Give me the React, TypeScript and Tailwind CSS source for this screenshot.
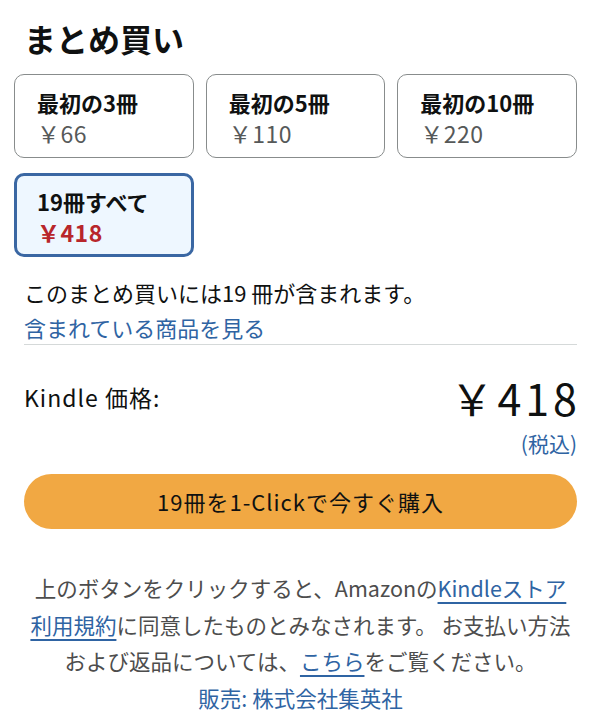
import React from "react"

const options = [
  { label: "最初の3冊", price: "￥66" },
  { label: "最初の5冊", price: "￥110" },
  { label: "最初の10冊", price: "￥220" },
]

export default function App() {
  return (
    <div
      className="w-[594px] min-h-[724px] bg-white pl-6 pr-[17px] pt-[18px] text-[#0f1111]"
      style={{ fontFamily: '"Noto Sans CJK JP", "Noto Sans", sans-serif' }}
    >
      <h2 className="text-[32px] font-bold leading-[40px]">まとめ買い</h2>

      <div className="-ml-[10px] mt-4 grid grid-cols-3 gap-x-3 gap-y-[15px]">
        {options.map((o) => (
          <div
            key={o.label}
            className="h-[84px] rounded-[10px] border border-[#888c8c] bg-white pl-[22px] pt-[12px]"
          >
            <div className="text-[22px] font-bold leading-[31px]">{o.label}</div>
            <div className="text-[23px] leading-[31px] tracking-[0.5px] text-[#565959]">{o.price}</div>
          </div>
        ))}
        <div className="h-[84px] rounded-[10px] border-[3px] border-[#3a67a3] bg-[#eef7ff] pl-[20px] pt-[10px]">
          <div className="text-[22px] font-bold leading-[31px]">19冊すべて</div>
          <div className="text-[23px] font-bold leading-[31px] tracking-[0.5px] text-[#b8262b]">￥418</div>
        </div>
      </div>

      <p className="mt-5 text-[22px] leading-[30px]">このまとめ買いには19 冊が含まれます。</p>
      <a className="mt-[5px] block text-[22px] leading-[30px] text-[#2f64a3]">含まれている商品を見る</a>
      <div className="mt-[2px] h-px bg-[#d5d9d9]" />

      <div className="flex justify-between">
        <div className="mt-[37px] text-[23px] leading-[30px] tracking-[1px]">Kindle 価格:</div>
        <div className="mt-[28px] flex flex-col items-end">
          <div className="-mr-[4px] text-[43px] leading-[48px] tracking-[4px]">￥418</div>
          <div className="mt-[7px] text-[21px] leading-[30px] text-[#2f64a3]">(税込)</div>
        </div>
      </div>

      <button className="mt-4 flex h-[55px] w-full items-center justify-center rounded-full bg-[#f1a843] text-[22px] tracking-[1px] text-[#0f1111]">
        19冊を1-Clickで今すぐ購入
      </button>

      <div className="-mx-2 mt-[41px] text-center text-[21.5px] leading-[36.5px] text-[#4d4d4d]">
        上のボタンをクリックすると、Amazonの
        <a className="text-[#2f64a3] underline decoration-2 underline-offset-[5px]">
          Kindleストア
          <br />
          利用規約
        </a>
        に同意したものとみなされます。 お支払い方法
        <br />
        および返品については、
        <a className="text-[#2f64a3] underline decoration-2 underline-offset-[5px]">こちら</a>
        をご覧ください。
        <div className="text-[#2f64a3]">販売: 株式会社集英社</div>
      </div>
    </div>
  )
}
